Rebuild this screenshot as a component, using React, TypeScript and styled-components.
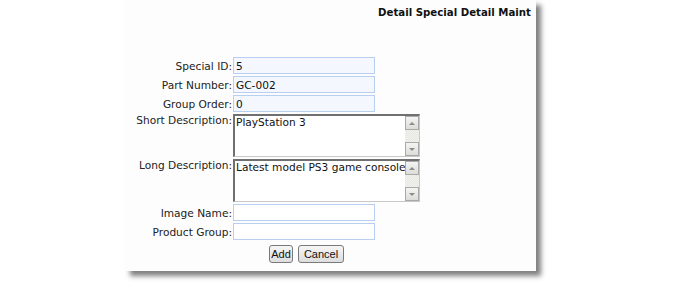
import styled, { createGlobalStyle } from 'styled-components';

const GlobalStyle = createGlobalStyle`
  html, body {
    margin: 0;
    padding: 0;
    background: #ffffff;
  }
  body {
    font-family: "DejaVu Sans", Verdana, sans-serif;
    font-size: 10.6px;
    color: #1a1a1a;
  }
`;

const Page = styled.div`
  width: 675px;
  height: 291px;
  overflow: hidden;
`;

const Card = styled.div`
  margin-left: 125px;
  width: 411px;
  height: 271px;
  background: #fdfdfd;
  box-shadow: 5px 5px 5px rgba(0, 0, 0, 0.5);
  display: flex;
  flex-direction: column;
`;

const Title = styled.div`
  padding: 7px 5px 0 0;
  height: 12px;
  line-height: 12px;
  text-align: right;
  font-size: 10.2px;
  font-weight: bold;
  color: #111;
`;

const Form = styled.div`
  margin-top: 38px;
  display: flex;
  flex-direction: column;
  gap: 2px;
`;

const Row = styled.div<{ $top?: boolean }>`
  display: grid;
  grid-template-columns: 107px 1fr;
  column-gap: 1px;
  align-items: ${(p) => (p.$top ? 'start' : 'center')};
`;

const Label = styled.label`
  text-align: right;
  line-height: 12px;
  white-space: nowrap;
  color: #222;
`;

const Input = styled.input<{ $fill?: boolean }>`
  box-sizing: border-box;
  width: 142px;
  height: 17px;
  margin: 0;
  padding: 0 2px;
  border: 1px solid #b9cff2;
  background: ${(p) => (p.$fill ? '#f4f8fe' : '#ffffff')};
  font-family: "DejaVu Sans", Verdana, sans-serif;
  font-size: 10.6px;
  color: #111;
  outline: none;
`;

const AreaBox = styled.div`
  box-sizing: border-box;
  width: 187px;
  height: 43px;
  display: flex;
  border-top: 2px solid #707070;
  border-left: 2px solid #707070;
  border-right: 1px solid #c8c8c8;
  border-bottom: 1px solid #c8c8c8;
  background: #fff;
`;

const Area = styled.textarea`
  flex: 1;
  margin: 0;
  padding: 0 1px;
  border: none;
  resize: none;
  overflow: hidden;
  font-family: "DejaVu Sans", Verdana, sans-serif;
  font-size: 10.6px;
  line-height: 13px;
  color: #111;
  background: transparent;
  outline: none;
  white-space: nowrap;
`;

const ScrollTrack = styled.div`
  width: 14px;
  display: flex;
  flex-direction: column;
  justify-content: space-between;
  background: repeating-conic-gradient(#e6e5e0 0 25%, #f3f3ef 0 50%) 0 0 / 2px 2px;
`;

const ScrollButton = styled.div<{ $down?: boolean }>`
  box-sizing: border-box;
  width: 14px;
  height: 14px;
  border: 1px solid #a9a9a9;
  background: linear-gradient(#f4f4f2, #dcdcd8);
  display: flex;
  align-items: center;
  justify-content: center;

  &::after {
    content: '';
    width: 0;
    height: 0;
    border-left: 3px solid transparent;
    border-right: 3px solid transparent;
    ${(p) =>
      p.$down
        ? 'border-top: 3px solid #8a8a8a;'
        : 'border-bottom: 3px solid #8a8a8a;'}
  }
`;

const Buttons = styled.div`
  grid-column: 2;
  display: flex;
  gap: 5px;
  padding-left: 36px;
  margin-top: 3px;
`;

const Button = styled.button<{ $w: number }>`
  box-sizing: border-box;
  width: ${(p) => p.$w}px;
  height: 18px;
  padding: 0;
  border: 1px solid #7a7a7a;
  border-radius: 3px;
  background: linear-gradient(#f6f6f6, #dddddd);
  font-family: "Liberation Sans", Arial, sans-serif;
  font-size: 11px;
  color: #111;
`;

function TextBox({ value }: { value: string }) {
  return (
    <AreaBox>
      <Area defaultValue={value} />
      <ScrollTrack>
        <ScrollButton />
        <ScrollButton $down />
      </ScrollTrack>
    </AreaBox>
  );
}

export default function App(): JSX.Element {
  return (
    <Page>
      <GlobalStyle />
      <Card>
        <Title>Detail Special Detail Maint</Title>
        <Form>
          <Row>
            <Label>Special ID:</Label>
            <Input $fill defaultValue="5" />
          </Row>
          <Row>
            <Label>Part Number:</Label>
            <Input $fill defaultValue="GC-002" />
          </Row>
          <Row>
            <Label>Group Order:</Label>
            <Input $fill defaultValue="0" />
          </Row>
          <Row $top>
            <Label>Short Description:</Label>
            <TextBox value="PlayStation 3" />
          </Row>
          <Row $top>
            <Label>Long Description:</Label>
            <TextBox value="Latest model PS3 game console" />
          </Row>
          <Row>
            <Label>Image Name:</Label>
            <Input />
          </Row>
          <Row>
            <Label>Product Group:</Label>
            <Input />
          </Row>
          <Row>
            <Buttons>
              <Button $w={24}>Add</Button>
              <Button $w={46}>Cancel</Button>
            </Buttons>
          </Row>
        </Form>
      </Card>
    </Page>
  );
}
